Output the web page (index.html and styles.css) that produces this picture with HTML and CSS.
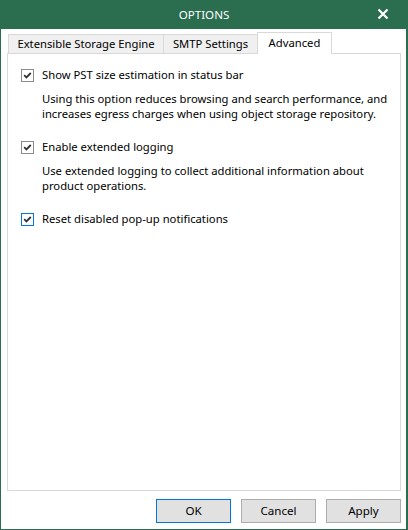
FILE: index.html
```html
<!DOCTYPE html>
<html>
<head>
<meta charset="utf-8">
<link rel="stylesheet" href="styles.css">
</head>
<body>
<div class="window">
  <div class="titlebar">
    <span class="title">OPTIONS</span>
    <svg class="close" width="12" height="12" viewBox="0 0 12 12"><path d="M1.5 1.5 L10.5 10.5 M10.5 1.5 L1.5 10.5" stroke="#fff" stroke-width="2.2" fill="none"/></svg>
  </div>
  <div class="content">
    <div class="tabs">
      <div class="tab tab-ese">Extensible Storage Engine</div>
      <div class="tab tab-smtp">SMTP Settings</div>
      <div class="tab tab-adv active">Advanced</div>
    </div>
    <div class="panel">
      <div class="option">
        <div class="check-row"><span class="box"><svg width="11" height="11" viewBox="0 0 11 11"><path d="M2.2 5.2 L4.4 7.4 L8.8 3" stroke="#333" stroke-width="1.8" fill="none"/></svg></span><span class="label">Show PST size estimation in status bar</span></div>
        <p class="desc">Using this option reduces browsing and search performance, and increases egress charges when using object storage repository.</p>
      </div>
      <div class="option">
        <div class="check-row"><span class="box"><svg width="11" height="11" viewBox="0 0 11 11"><path d="M2.2 5.2 L4.4 7.4 L8.8 3" stroke="#333" stroke-width="1.8" fill="none"/></svg></span><span class="label">Enable extended logging</span></div>
        <p class="desc">Use extended logging to collect additional information about product operations.</p>
      </div>
      <div class="option">
        <div class="check-row"><span class="box focused"><svg width="11" height="11" viewBox="0 0 11 11"><path d="M2.2 5.2 L4.4 7.4 L8.8 3" stroke="#333" stroke-width="1.8" fill="none"/></svg></span><span class="label">Reset disabled pop-up notifications</span></div>
      </div>
    </div>
    <div class="footer">
      <button class="btn default">OK</button>
      <button class="btn">Cancel</button>
      <button class="btn">Apply</button>
    </div>
  </div>
</div>
</body>
</html>
```

FILE: styles.css
```css
html, body {
  margin: 0;
  padding: 0;
  background: #fff;
}
body {
  width: 408px;
  height: 530px;
  font-family: "Noto Sans", "Open Sans", sans-serif;
  font-size: 11.25px;
  color: #000;
}
.window {
  box-sizing: border-box;
  width: 408px;
  height: 530px;
  border-left: 1px solid #2a6d4f;
  border-right: 2px solid #2a6d4f;
  border-bottom: 1px solid #2a6d4f;
  display: flex;
  flex-direction: column;
}
.titlebar {
  height: 29px;
  background: #2a6d4f;
  position: relative;
  display: flex;
  align-items: center;
  justify-content: center;
  color: #fff;
}
.title {
  font-size: 11.6px;
  line-height: 16px;
  margin-left: 1px;
}
.close {
  position: absolute;
  right: 17px;
  top: 8px;
}
.content {
  flex: 1;
  display: flex;
  flex-direction: column;
  padding: 3px 5px 0 6px;
}
.tabs {
  display: flex;
  align-items: flex-end;
  height: 21px;
  padding-left: 1px;
}
.tab {
  box-sizing: border-box;
  height: 19px;
  border: 1px solid #d9d9d9;
  border-bottom: none;
  background: #f0f0f0;
  display: flex;
  align-items: center;
  justify-content: center;
  line-height: 16px;
  padding-bottom: 1px;
}
.tab-ese { width: 156px; }
.tab-smtp { width: 95px; margin-left: -1px; }
.tab-adv { width: 75px; margin-left: -1px; }
.tab.active {
  height: 22px;
  background: #fff;
  margin-bottom: -1px;
  position: relative;
  z-index: 1;
  padding-bottom: 2px;
}
.panel {
  box-sizing: border-box;
  height: 438px;
  border: 1px solid #d9d9d9;
  padding: 13px 6px 0 13px;
}
.option {
  margin-bottom: 18px;
}
.option:nth-child(2) {
  margin-top: 1px;
}
.check-row {
  display: flex;
  align-items: center;
  height: 16px;
}
.box {
  box-sizing: border-box;
  width: 13px;
  height: 13px;
  border: 1px solid #8a8a8a;
  display: flex;
  align-items: center;
  justify-content: center;
  margin-right: 8px;
  background: #fff;
}
.box.focused {
  border-color: #0078d7;
}
.label {
  line-height: 16px;
}
.desc {
  margin: 8px 0 0 21px;
  line-height: 15px;
}
.footer {
  display: flex;
  justify-content: flex-end;
  gap: 10px;
  padding-top: 8px;
}
.btn {
  box-sizing: border-box;
  width: 75px;
  height: 24px;
  background: #e1e1e1;
  border: 1px solid #adadad;
  font-family: "Noto Sans", "Open Sans", sans-serif;
  font-size: 11.6px;
  color: #000;
  padding: 0 0 1px;
  margin: 0;
}
.btn.default {
  border-color: #0078d7;
}
```
